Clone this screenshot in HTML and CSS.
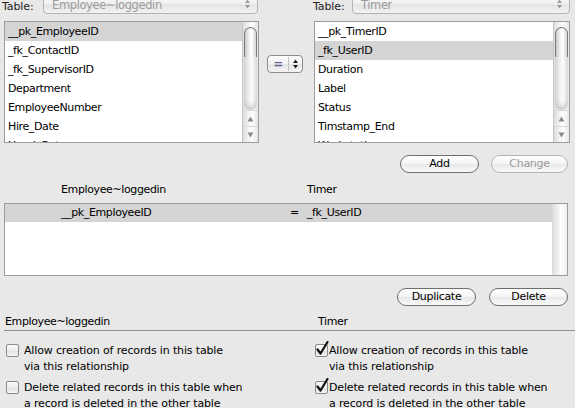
FILE: index.html
```html
<!DOCTYPE html>
<html>
<head>
<meta charset="utf-8">
<link rel="stylesheet" href="styles.css">
</head>
<body>
<div class="window">
  <div class="top">
    <div class="tablerow left">
      <span class="lbl">Table:</span>
      <div class="popup"><span class="ptext">Employee~loggedin</span><span class="parrows"><svg width="7" height="10" viewBox="0 0 7 10"><path d="M3.5 0.5 L6 4 L1 4 Z M3.5 9.5 L6 6 L1 6 Z" fill="#9a9a9a"/></svg></span></div>
    </div>
    <div></div>
    <div class="tablerow right">
      <span class="lbl">Table:</span>
      <div class="popup"><span class="ptext">Timer</span><span class="parrows"><svg width="7" height="10" viewBox="0 0 7 10"><path d="M3.5 0.5 L6 4 L1 4 Z M3.5 9.5 L6 6 L1 6 Z" fill="#9a9a9a"/></svg></span></div>
    </div>

    <div class="list">
      <div class="rows">
        <div class="row sel">__pk_EmployeeID</div>
        <div class="row">_fk_ContactID</div>
        <div class="row">_fk_SupervisorID</div>
        <div class="row">Department</div>
        <div class="row">EmployeeNumber</div>
        <div class="row">Hire_Date</div>
        <div class="row">HourlyRate</div>
      </div>
      <div class="scroll">
        <div class="thumb"></div>
        <div class="track"></div>
        <div class="arr"><svg width="7" height="6" viewBox="0 0 7 6"><path d="M3.5 0.5 L6.5 5.5 L0.5 5.5 Z" fill="#8a8a8a"/></svg></div>
        <div class="arr"><svg width="7" height="6" viewBox="0 0 7 6"><path d="M3.5 5.5 L6.5 0.5 L0.5 0.5 Z" fill="#8a8a8a"/></svg></div>
      </div>
    </div>
    <div class="mid">
      <div class="oppopup"><span class="opeq">=</span><span class="opsep"></span><span class="oparr"><svg width="7" height="10" viewBox="0 0 7 10"><path d="M3.5 0.5 L6 4 L1 4 Z M3.5 9.5 L6 6 L1 6 Z" fill="#222"/></svg></span></div>
    </div>
    <div class="list">
      <div class="rows">
        <div class="row">__pk_TimerID</div>
        <div class="row sel">_fk_UserID</div>
        <div class="row">Duration</div>
        <div class="row">Label</div>
        <div class="row">Status</div>
        <div class="row">Timstamp_End</div>
        <div class="row">Workstation</div>
      </div>
      <div class="scroll">
        <div class="thumb"></div>
        <div class="track"></div>
        <div class="arr"><svg width="7" height="6" viewBox="0 0 7 6"><path d="M3.5 0.5 L6.5 5.5 L0.5 5.5 Z" fill="#8a8a8a"/></svg></div>
        <div class="arr"><svg width="7" height="6" viewBox="0 0 7 6"><path d="M3.5 5.5 L6.5 0.5 L0.5 0.5 Z" fill="#8a8a8a"/></svg></div>
      </div>
    </div>
  </div>

  <div class="btnrow first">
    <button class="btn">Add</button>
    <button class="btn dis">Change</button>
  </div>

  <div class="relhead">
    <span class="c1">Employee~loggedin</span>
    <span class="c3">Timer</span>
  </div>
  <div class="rellist">
    <div class="relrows">
      <div class="relrow sel"><span class="c1">__pk_EmployeeID</span><span class="c2">=</span><span class="c3">_fk_UserID</span></div>
    </div>
    <div class="reltrack"></div>
  </div>

  <div class="btnrow second">
    <button class="btn">Duplicate</button>
    <button class="btn">Delete</button>
  </div>

  <div class="opts">
    <div class="opthead"><span class="oh1">Employee~loggedin</span><span class="oh2">Timer</span></div>
    <div class="optcols">
      <div class="optcol leftopt">
        <label class="opt"><span class="cb"></span><span class="otext">Allow creation of records in this table<br>via this relationship</span></label>
        <label class="opt"><span class="cb"></span><span class="otext">Delete related records in this table when<br>a record is deleted in the other table</span></label>
      </div>
      <div class="optcol rightopt">
        <label class="opt"><span class="cb on"><svg width="14" height="15" viewBox="0 0 14 15"><path d="M2.5 8.5 L5.5 12.5 L12.5 1" fill="none" stroke="#111" stroke-width="2.2" stroke-linecap="round" stroke-linejoin="round"/></svg></span><span class="otext">Allow creation of records in this table<br>via this relationship</span></label>
        <label class="opt"><span class="cb on"><svg width="14" height="15" viewBox="0 0 14 15"><path d="M2.5 8.5 L5.5 12.5 L12.5 1" fill="none" stroke="#111" stroke-width="2.2" stroke-linecap="round" stroke-linejoin="round"/></svg></span><span class="otext">Delete related records in this table when<br>a record is deleted in the other table</span></label>
      </div>
    </div>
  </div>
</div>
</body>
</html>
```

FILE: styles.css
```css
* { box-sizing: border-box; }
html, body {
  margin: 0;
  padding: 0;
  background: #e8e8e8;
  width: 575px;
  height: 408px;
  overflow: hidden;
}
body {
  font-family: "DejaVu Sans", "Lucida Grande", sans-serif;
  font-size: 11px;
  letter-spacing: -0.38px;
  color: #000;
}
.window {
  margin-top: -6px;
  padding-left: 4px;
}
.top {
  display: grid;
  grid-template-columns: 255px 55px 256px;
  grid-template-rows: 20px 122px;
  row-gap: 7px;
}
.tablerow {
  display: flex;
  align-items: center;
}
.tablerow .lbl {
  color: #222;
  padding-top: 4px;
  letter-spacing: -0.1px;
}
.tablerow.left .lbl { margin-left: -2px; }
.tablerow.right .lbl { margin-left: -1px; }
.popup {
  margin-left: auto;
  height: 20px;
  border: 1px solid #b4b4b4;
  border-radius: 4px;
  background: linear-gradient(#fafafa, #f0f0f0 50%, #e4e4e4 51%, #f2f2f2);
  display: flex;
  align-items: center;
  justify-content: space-between;
  padding: 0 6px 0 8px;
}
.tablerow.left .popup { width: 215px; margin-right: 1px; }
.tablerow.right .popup { width: 218px; }
.ptext {
  font-size: 11.5px;
  color: #9c9c9c;
  padding-top: 1px;
}
.parrows { display: flex; }

.list {
  border: 1px solid #9c9c9c;
  background: #fff;
  display: flex;
  overflow: hidden;
}
.list .rows {
  flex: 1;
  overflow: hidden;
}
.row {
  height: 19px;
  line-height: 19px;
  padding-left: 3px;
  white-space: nowrap;
}
.row.sel { background: #d4d4d4; }
.scroll {
  width: 16px;
  border-left: 1px solid #c8c8c8;
  display: flex;
  flex-direction: column;
  background: linear-gradient(90deg, #dcdcdc, #f2f2f2 35%, #fdfdfd 60%, #e6e6e6);
}
.thumb {
  margin: 5px 1px 0 1px;
  height: 30px;
  border: 1px solid #7a7a7a;
  border-bottom: none;
  border-radius: 7px 7px 0 0;
  background: linear-gradient(90deg, #c8c8c8, #f4f4f4 40%, #ffffff 60%, #d4d4d4);
}
.track {
  flex: 1;
  margin: 0 1px;
  background: linear-gradient(90deg, #d6d6d6, #f4f4f4 45%, #fcfcfc 60%, #dcdcdc);
  border-radius: 0 0 7px 7px;
  box-shadow: inset 0 -6px 6px -4px #bdbdbd;
}
.arr {
  height: 16px;
  display: flex;
  align-items: center;
  justify-content: center;
  border-top: 1px solid #d8d8d8;
}
.mid { padding: 34px 0 0 8px; }
.oppopup {
  width: 36px;
  height: 18px;
  border: 1px solid #8c8c8c;
  border-radius: 4px;
  background: linear-gradient(#fdfdfd, #f2f2f2 50%, #e6e6e6 51%, #f4f4f4);
  display: flex;
  align-items: center;
}
.opeq {
  width: 20px;
  text-align: center;
  font-size: 12px;
  color: #5a6d8a;
  font-weight: bold;
}
.opsep { width: 1px; height: 14px; background: #c4c4c4; }
.oparr { flex: 1; display: flex; justify-content: center; }

.btnrow {
  display: flex;
  justify-content: flex-end;
  gap: 12px;
  padding-right: 7px;
}
.btnrow.first { margin-top: 12px; }
.btnrow.second { margin-top: 12px; gap: 13px; }
.btn {
  width: 79px;
  height: 18px;
  border: 1px solid #6e6e6e;
  border-radius: 9px;
  background: linear-gradient(#ffffff, #f4f4f4 50%, #e8e8e8 51%, #fafafa);
  font-family: inherit;
  font-size: 11px;
  letter-spacing: -0.3px;
  color: #000;
  padding: 0;
  line-height: 16px;
}
.btn.dis {
  border-color: #b4b4b4;
  color: #9a9a9a;
  width: 77px;
}

.relhead {
  display: flex;
  height: 14px;
  margin-top: 10px;
  line-height: 14px;
}
.relhead .c1 { margin-left: 57px; width: 246px; }
.rellist {
  margin-top: 6px;
  width: 564px;
  height: 73px;
  border: 1px solid #9c9c9c;
  background: #fff;
  display: flex;
}
.relrows { flex: 1; }
.relrow {
  height: 18px;
  line-height: 18px;
  display: flex;
  white-space: nowrap;
}
.relrow.sel { background: #d4d4d4; }
.relrow .c1 { margin-left: 56px; width: 229px; }
.relrow .c2 { width: 17px; }
.reltrack {
  width: 15px;
  background: linear-gradient(90deg, #dcdcdc, #efefef 40%, #fdfdfd 60%, #f0f0f0);
}

.opts { margin-top: 9px; }
.opthead {
  display: flex;
  height: 16px;
  line-height: 14px;
  border-bottom: 1px solid #8e8e8e;
  margin-right: -4px;
}
.oh1 { padding-left: 1px; width: 314px; }
.optcols {
  display: flex;
  padding-top: 12px;
}
.optcol {
  display: flex;
  flex-direction: column;
  gap: 5px;
}
.leftopt { width: 311px; padding-left: 2px; }
.opt {
  display: flex;
  align-items: flex-start;
  line-height: 16px;
  letter-spacing: -0.15px;
}
.cb {
  flex: none;
  width: 13px;
  height: 13px;
  margin-top: 1px;
  border: 1px solid #8a8a8a;
  border-radius: 2px;
  background: linear-gradient(#fbfbfb, #ececec 50%, #e0e0e0 51%, #f4f4f4);
  position: relative;
}
.leftopt .cb { margin-right: 5px; }
.rightopt .cb { margin-right: 1px; }
.cb svg {
  position: absolute;
  left: -1px;
  top: -4px;
}
```
